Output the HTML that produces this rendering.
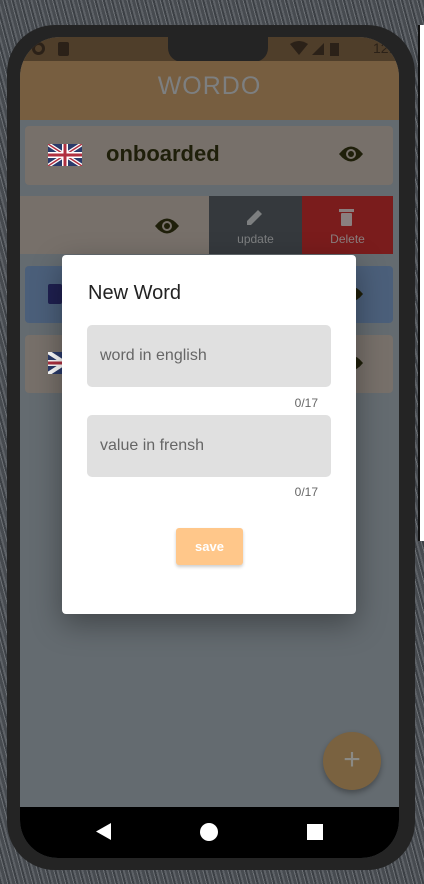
<!DOCTYPE html>
<html><head><meta charset="utf-8"><style>
*{margin:0;padding:0;box-sizing:border-box}
body{width:424px;height:884px;overflow:hidden;position:relative;font-family:"Liberation Sans",Roboto,sans-serif;
background:repeating-linear-gradient(75deg,#3c4045 0 2px,#5e6267 2px 4px,#474b50 4px 7px,#6c7075 7px 8px);}
.abs{position:absolute}
.frame{left:7px;top:25px;width:408px;height:845px;background:#242424;border-radius:48px}
.screen{left:20px;top:37px;width:379px;height:821px;border-radius:40px 40px 38px 38px;overflow:hidden;background:#646b70}
.status{left:0;top:0;width:379px;height:24px;background:#4f3e2a}
.appbar{left:0;top:24px;width:379px;height:59px;background:#775e40;color:#7d7f80;text-align:center;font-size:25px;line-height:50px;letter-spacing:1px;font-weight:300}
.notch{left:148px;top:0;width:100px;height:25px;background:#242424;border-radius:0 0 14px 14px}
.card{border-radius:4px;background:#77706a}
.nav{left:0;top:770px;width:379px;height:51px;background:#000}
.dlg{left:62px;top:255px;width:294px;height:359px;background:#fff;border-radius:4px;box-shadow:0 10px 30px rgba(0,0,0,.35)}
.field{left:25px;width:244px;height:62px;background:#e0e0e0;border-radius:5px;color:#666;font-size:16px;line-height:62px;padding-left:13px}
.cnt{right:38px;font-size:12px;color:#666}
</style></head><body>
<div class="abs" style="left:418px;top:25px;width:6px;height:516px;background:#fff;border-left:2px solid #111"></div>
<div class="abs frame"></div>
<div class="abs screen">
 <div class="abs status"></div>
 <div class="abs notch"></div>
 <div class="abs" style="left:12px;top:5px;width:13px;height:13px;border:3px solid #2b2118;border-radius:50%"></div>
 <div class="abs" style="left:38px;top:5px;width:11px;height:14px;background:#2b2118;border-radius:2px"></div>
 <svg class="abs" style="left:270px;top:4px" width="60" height="16"><path d="M0 3 Q9 -3 18 3 L9 14Z" fill="#2b2118"/><path d="M22 14 L34 2 L34 14Z" fill="#2b2118"/><rect x="40" y="2" width="9" height="13" fill="#2b2118"/></svg>
 <div class="abs" style="left:353px;top:3px;font-size:14px;color:#2b2118">12:17</div>
 <div class="abs appbar">WORDO</div>
 <div class="abs card" style="left:5px;top:89px;width:368px;height:59px"></div>
 <svg class="abs" style="left:28px;top:107px" width="34" height="22" viewBox="0 0 34 22"><rect width="34" height="22" fill="#2a3a6a"/><path d="M0 0L34 22M34 0L0 22" stroke="#fff" stroke-width="4"/><path d="M0 0L34 22M34 0L0 22" stroke="#b03040" stroke-width="1.5"/><path d="M17 0V22M0 11H34" stroke="#fff" stroke-width="6"/><path d="M17 0V22M0 11H34" stroke="#b03040" stroke-width="3"/></svg>
 <div class="abs" style="left:86px;top:104px;font-size:22px;font-weight:bold;color:#1f1f0a">onboarded</div>
 <svg class="abs" style="left:319px;top:108px" width="24" height="18" viewBox="0 0 24 18"><path d="M0 9Q12 -6 24 9Q12 24 0 9Z" fill="#1f1f0a"/><circle cx="12" cy="9" r="5" fill="#77706a"/><circle cx="12" cy="9" r="3" fill="#1f1f0a"/></svg>
 <div class="abs" style="left:0;top:159px;width:189px;height:58px;background:#77706a"></div>
 <svg class="abs" style="left:135px;top:180px" width="24" height="18" viewBox="0 0 24 18"><path d="M0 9Q12 -6 24 9Q12 24 0 9Z" fill="#1f1f0a"/><circle cx="12" cy="9" r="5" fill="#77706a"/><circle cx="12" cy="9" r="3" fill="#1f1f0a"/></svg>
 <div class="abs" style="left:189px;top:159px;width:93px;height:58px;background:#35393d;color:#7d7f80;font-size:12px;text-align:center;padding-top:36px">update</div>
 <svg class="abs" style="left:225px;top:170px" width="20" height="20"><path d="M2 18 L2 14 L13 3 L17 7 L6 18Z" fill="#7d7f80"/></svg>
 <div class="abs" style="left:282px;top:159px;width:91px;height:58px;background:#7a1c1c;color:#8a7f7f;font-size:12px;text-align:center;padding-top:36px">Delete</div>
 <svg class="abs" style="left:318px;top:170px" width="18" height="20"><rect x="1" y="2" width="15" height="3" fill="#8a7f7f"/><rect x="3" y="6" width="11" height="13" rx="1" fill="#8a7f7f"/></svg>
 <div class="abs card" style="left:5px;top:229px;width:368px;height:57px;background:#4b5f7a"></div>
 <div class="abs" style="left:28px;top:247px;width:14px;height:20px;background:#1f2050;border-radius:2px"></div>
 <svg class="abs" style="left:319px;top:248px" width="24" height="18" viewBox="0 0 24 18"><path d="M0 9Q12 -6 24 9Q12 24 0 9Z" fill="#1f1f0a"/></svg>
 <div class="abs card" style="left:5px;top:298px;width:368px;height:58px"></div>
 <svg class="abs" style="left:319px;top:317px" width="24" height="18" viewBox="0 0 24 18"><path d="M0 9Q12 -6 24 9Q12 24 0 9Z" fill="#1f1f0a"/></svg>
 <svg class="abs" style="left:28px;top:315px" width="34" height="22" viewBox="0 0 34 22"><rect width="34" height="22" fill="#2a3a6a"/><path d="M0 0L34 22M34 0L0 22" stroke="#fff" stroke-width="4"/><path d="M17 0V22M0 11H34" stroke="#fff" stroke-width="6"/><path d="M17 0V22M0 11H34" stroke="#b03040" stroke-width="3"/></svg>
 <div class="abs" style="left:303px;top:695px;width:58px;height:58px;border-radius:50%;background:#7a6240;box-shadow:0 3px 6px rgba(0,0,0,.3);color:#8b8a85;font-size:30px;text-align:center;line-height:56px;font-weight:300">+</div>
 <div class="abs nav"></div>
 <svg class="abs" style="left:76px;top:786px" width="16" height="18"><path d="M15 0V17L0 8.5Z" fill="#fff"/></svg>
 <div class="abs" style="left:180px;top:786px;width:18px;height:18px;border-radius:50%;background:#fff"></div>
 <div class="abs" style="left:287px;top:787px;width:16px;height:16px;background:#fff"></div>
</div>
<div class="abs dlg">
 <div class="abs" style="left:26px;top:27px;font-size:20px;color:#222;font-weight:500">New Word</div>
 <div class="abs field" style="top:70px">word in english</div>
 <div class="abs cnt" style="top:141px">0/17</div>
 <div class="abs field" style="top:160px">value in frensh</div>
 <div class="abs cnt" style="top:230px">0/17</div>
 <div class="abs" style="left:114px;top:273px;width:67px;height:37px;background:#ffc78a;border-radius:3px;box-shadow:0 2px 3px rgba(0,0,0,.2);color:#fff;font-weight:bold;font-size:13px;text-align:center;line-height:37px">save</div>
</div>
</body></html>
